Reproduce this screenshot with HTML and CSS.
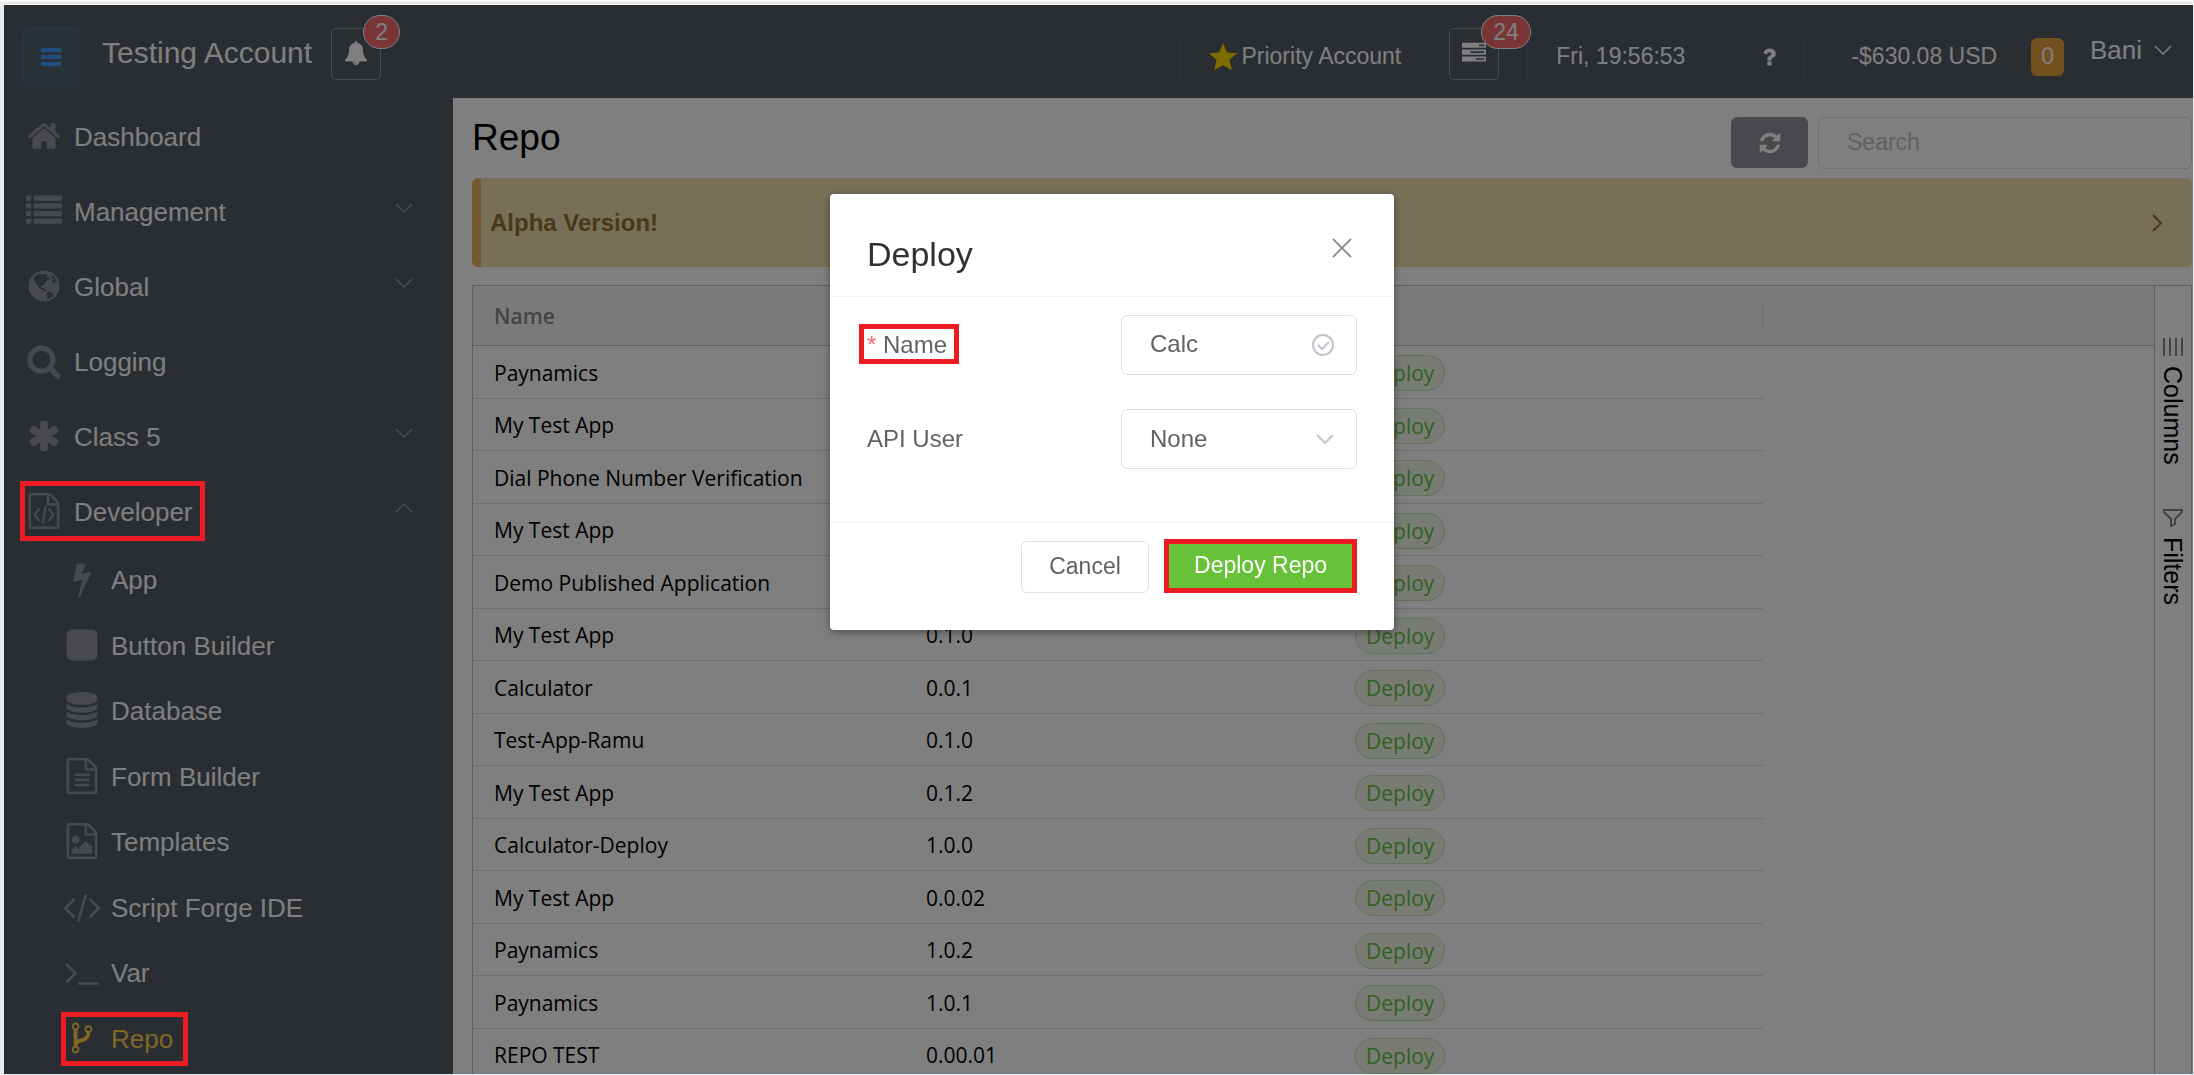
FILE: index.html
```html
<!DOCTYPE html>
<html lang="en">
<head>
<meta charset="utf-8">
<title>Repo</title>
<link rel="stylesheet" href="styles.css">
</head>
<body>
<svg class="sprite" aria-hidden="true">
  <symbol id="i-home" viewBox="0 0 1792 1792"><path d="M1472 992v480q0 26-19 45t-45 19h-384v-384h-256v384h-384q-26 0-45-19t-19-45v-480q0-1 .5-3t.5-3l575-474 575 474q1 2 1 6zm223-69l-62 74q-8 9-21 11h-3q-13 0-21-7l-692-577-692 577q-12 8-24 7-13-2-21-11l-62-74q-8-10-7-23.5t11-21.5l719-599q32-26 76-26t76 26l244 204v-195q0-14 9-23t23-9h192q14 0 23 9t9 23v408l219 182q10 8 11 21.5t-7 23.5z"/></symbol>
  <symbol id="i-list" viewBox="0 0 1792 1792"><g><rect x="0" y="128" width="256" height="256" rx="32"/><rect x="384" y="128" width="1408" height="256" rx="32"/><rect x="0" y="512" width="256" height="256" rx="32"/><rect x="384" y="512" width="1408" height="256" rx="32"/><rect x="0" y="896" width="256" height="256" rx="32"/><rect x="384" y="896" width="1408" height="256" rx="32"/><rect x="0" y="1280" width="256" height="256" rx="32"/><rect x="384" y="1280" width="1408" height="256" rx="32"/></g></symbol>
  <symbol id="i-globe" viewBox="0 0 1792 1792"><path fill-rule="evenodd" d="M896 128a768 768 0 1 0 0 1536a768 768 0 1 0 0-1536zM400 450L540 340L700 300L790 330L870 290L960 320L1010 300L1080 360L1010 400L1060 470L1140 440L1210 540L1120 600L1040 640L960 740L900 800L910 880L860 850L780 850L730 920L760 1000L840 1010L880 960L910 1060L1010 1100L1060 1130L1010 1160L880 1110L760 1060L640 980L600 880L500 760L440 640L380 600zM1060 1190L1180 1170L1340 1260L1400 1300L1320 1420L1180 1500L1060 1560L1010 1550L1080 1400L1010 1300zM1250 330L1360 400L1460 520L1530 700L1440 690L1380 780L1330 730L1310 620L1360 540L1280 480L1240 400z"/></symbol>
  <symbol id="i-search" viewBox="0 0 1792 1792"><path d="M1216 832q0-185-131.500-316.500t-316.500-131.500-316.500 131.500-131.500 316.500 131.500 316.500 316.500 131.500 316.500-131.500 131.500-316.500zm512 832q0 52-38 90t-90 38q-54 0-90-38l-343-342q-179 124-399 124-143 0-273.500-55.500t-225-150-150-225-55.500-273.500 55.500-273.500 150-225 225-150 273.500-55.500 273.500 55.500 225 150 150 225 55.500 273.500q0 220-124 399l343 343q37 37 37 90z"/></symbol>
  <symbol id="i-asterisk" viewBox="0 0 1792 1792"><path d="M1546 1050q46 26 59.500 77.500t-12.500 97.500l-64 110q-26 46-77.500 59.500t-97.500-12.500l-266-153v307q0 52-38 90t-90 38h-128q-52 0-90-38t-38-90v-307l-266 153q-46 26-97.500 12.500t-77.500-59.500l-64-110q-26-46-12.500-97.500t59.500-77.500l266-154-266-154q-46-26-59.500-77.500t12.500-97.500l64-110q26-46 77.500-59.500t97.500 12.500l266 153v-307q0-52 38-90t90-38h128q52 0 90 38t38 90v307l266-153q46-26 97.500-12.500t77.500 59.500l64 110q26 46 12.500 97.500t-59.500 77.500l-266 154z"/></symbol>
  <symbol id="i-filecode" viewBox="0 0 1792 1792"><path d="M1596 380q28 28 48 76t20 88v1152q0 40-28 68t-68 28h-1344q-40 0-68-28t-28-68v-1600q0-40 28-68t68-28h896q40 0 88 20t76 48zm-444-244v376h376q-10-29-22-41l-313-313q-12-12-41-22zm384 1528v-1024h-416q-40 0-68-28t-28-68v-416h-768v1536h1280z"/><path d="M640 800L430 1080L640 1360M1152 800L1362 1080L1152 1360M970 690L830 1480" fill="none" stroke="currentColor" stroke-width="110" stroke-linecap="round"/></symbol>
  <symbol id="i-bolt" viewBox="0 0 1792 1792"><path d="M1333 566q18 20 7 44l-540 1157q-13 25-42 25-4 0-14-2-17-5-25.500-19t-4.500-30l197-808-406 101q-4 1-12 1-18 0-31-11-18-15-13-39l201-825q4-14 16-23t28-9h328q19 0 32 12.500t13 29.500q0 8-5 18l-171 463 396-98q8-2 12-2 19 0 34 15z"/></symbol>
  <symbol id="i-square" viewBox="0 0 1792 1792"><rect x="128" y="128" width="1536" height="1536" rx="288"/></symbol>
  <symbol id="i-database" viewBox="0 0 1792 1792"><path d="M896 768q237 0 443-43t325-127v170q0 69-103 128t-280 93.500-385 34.500-385-34.500-280-93.500-103-128v-170q119 84 325 127t443 43zm0 768q237 0 443-43t325-127v170q0 69-103 128t-280 93.500-385 34.500-385-34.500-280-93.500-103-128v-170q119 84 325 127t443 43zm0-384q237 0 443-43t325-127v170q0 69-103 128t-280 93.500-385 34.500-385-34.500-280-93.500-103-128v-170q119 84 325 127t443 43zm0-1152q208 0 385 34.500t280 93.500 103 128v128q0 69-103 128t-280 93.500-385 34.500-385-34.500-280-93.500-103-128v-128q0-69 103-128t280-93.500 385-34.500z"/></symbol>
  <symbol id="i-filetext" viewBox="0 0 1792 1792"><path d="M1596 380q28 28 48 76t20 88v1152q0 40-28 68t-68 28h-1344q-40 0-68-28t-28-68v-1600q0-40 28-68t68-28h896q40 0 88 20t76 48zm-444-244v376h376q-10-29-22-41l-313-313q-12-12-41-22zm384 1528v-1024h-416q-40 0-68-28t-28-68v-416h-768v1536h1280z"/><path d="M512 768h768v128h-768zM512 1024h768v128h-768zM512 1280h768v128h-768z"/></symbol>
  <symbol id="i-fileimage" viewBox="0 0 1792 1792"><path d="M1596 380q28 28 48 76t20 88v1152q0 40-28 68t-68 28h-1344q-40 0-68-28t-28-68v-1600q0-40 28-68t68-28h896q40 0 88 20t76 48zm-444-244v376h376q-10-29-22-41l-313-313q-12-12-41-22zm384 1528v-1024h-416q-40 0-68-28t-28-68v-416h-768v1536h1280z"/><path d="M1408 1216v320h-1024v-192l192-192 128 128 384-384zM576 1024a192 192 0 1 1 0-384a192 192 0 1 1 0 384z"/></symbol>
  <symbol id="i-code" viewBox="0 0 1792 1792"><path d="M553 1399l-50 50q-10 10-23 10t-23-10l-466-466q-10-10-10-23t10-23l466-466q10-10 23-10t23 10l50 50q10 10 10 23t-10 23l-393 393 393 393q10 10 10 23t-10 23zm591-1067l-373 1291q-4 13-15.500 19.500t-23.500 2.500l-62-17q-13-4-19.500-15.500t-2.500-24.500l373-1291q4-13 15.500-19.500t23.500-2.500l62 17q13 4 19.500 15.500t2.500 24.500zm657 651l-466 466q-10 10-23 10t-23-10l-50-50q-10-10-10-23t10-23l393-393-393-393q-10-10-10-23t10-23l50-50q10-10 23-10t23 10l466 466q10 10 10 23t-10 23z"/></symbol>
  <symbol id="i-terminal" viewBox="0 0 1792 1792"><path d="M649 983l-466 466q-10 10-23 10t-23-10l-50-50q-10-10-10-23t10-23l393-393-393-393q-10-10-10-23t10-23l50-50q10-10 23-10t23 10l466 466q10 10 10 23t-10 23zm1079 457v64q0 14-9 23t-23 9h-960q-14 0-23-9t-9-23v-64q0-14 9-23t23-9h960q14 0 23 9t9 23z"/></symbol>
  <symbol id="i-fork" viewBox="0 0 1792 1792"><path d="M672 1472q0-40-28-68t-68-28-68 28-28 68 28 68 68 28 68-28 28-68zm0-1152q0-40-28-68t-68-28-68 28-28 68 28 68 68 28 68-28 28-68zm640 128q0-40-28-68t-68-28-68 28-28 68 28 68 68 28 68-28 28-68zm96 0q0 52-26 96.500t-70 69.500q-2 287-226 414-67 38-203 81-128 40-169.500 71t-41.500 100v26q44 25 70 69.500t26 96.500q0 80-56 136t-136 56-136-56-56-136q0-52 26-96.500t70-69.500v-820q-44-25-70-69.500t-26-96.500q0-80 56-136t136-56 136 56 56 136q0 52-26 96.500t-70 69.500v497q54-26 154-57 55-17 87.500-29.500t70.500-31 59-39.500 40.500-51 28-69.500 8.500-91.500q-44-25-70-69.500t-26-96.500q0-80 56-136t136-56 136 56 56 136z"/></symbol>
  <symbol id="i-bell" viewBox="0 0 1792 1792"><path d="M912 1696q0-16-16-16-59 0-101.500-42.500t-42.500-101.500q0-16-16-16t-16 16q0 73 51.500 124.500t124.500 51.500q16 0 16-16zm816-288q0 52-38 90t-90 38h-448q0 106-75 181t-181 75-181-75-75-181h-448q-52 0-90-38t-38-90q50-42 91-88t85-119.500 74.500-158.500 50-206 19.500-260q0-152 117-282.500t307-158.500q-8-19-8-39 0-40 28-68t68-28 68 28 28 68q0 20-8 39 190 28 307 158.500t117 282.500q0 139 19.500 260t50 206 74.500 158.500 85 119.500 91 88z"/></symbol>
  <symbol id="i-tasks" viewBox="0 0 1792 1792"><path fill-rule="evenodd" d="M0 128h1792v384h-1792zM1280 256v128h384v-128zM0 640h1792v384h-1792zM640 768v128h1024v-128zM0 1152h1792v384h-1792zM1024 1280v128h640v-128z"/></symbol>
  <symbol id="i-bars" viewBox="0 0 20 18"><path d="M0 0h20v4h-20zM0 7h20v4h-20zM0 14h20v4h-20z"/></symbol>
  <symbol id="i-star" viewBox="0 0 28 28"><path d="M14 0l4 9.500l10 .8l-7.600 6.700l2.500 10.300l-8.900-5l-8.900 5l2.500-10.300l-7.600-6.700l10-.8z"/></symbol>
  <symbol id="i-question" viewBox="0 0 1792 1792"><path d="M1088 1256v240q0 16-12 28t-28 12h-240q-16 0-28-12t-12-28v-240q0-16 12-28t28-12h240q16 0 28 12t12 28zm316-600q0 54-15.500 101t-35 76.500-55 59.500-57.500 43.500-61 35.500q-41 23-68.500 65t-27.500 67q0 17-12 32.500t-28 15.500h-240q-15 0-25.500-18.500t-10.500-37.500v-45q0-83 65-156.500t143-108.500q59-27 84-56t25-76q0-42-46.500-74t-107.500-32q-65 0-108 29-35 25-107 115-13 16-31 16-12 0-25-8l-164-125q-13-10-15.500-25t5.500-28q160-266 464-266 80 0 161 31t146 83 106 127.500 41 158.500z"/></symbol>
  <symbol id="i-refresh" viewBox="0 0 1792 1792"><path d="M1639 1056q0 5-1 7-64 268-268 434.500t-478 166.500q-146 0-282.500-55t-243.500-157l-129 129q-19 19-45 19t-45-19-19-45v-448q0-26 19-45t45-19h448q26 0 45 19t19 45-19 45l-137 137q71 66 161 102t187 36q134 0 250-65t186-179q11-17 53-117 8-23 30-23h192q13 0 22.500 9.500t9.500 22.500zm25-800v448q0 26-19 45t-45 19h-448q-26 0-45-19t-19-45 19-45l138-138q-148-137-349-137-134 0-250 65t-186 179q-11 17-53 117-8 23-30 23h-199q-13 0-22.500-9.500t-9.500-22.500v-7q65-268 270-434.500t480-166.500q146 0 284 55.500t245 156.500l130-129q19-19 45-19t45 19 19 45z"/></symbol>
  <symbol id="i-down" viewBox="0 0 18 18"><path class="line" d="M1 5l8 8l8-8"/></symbol>
  <symbol id="i-up" viewBox="0 0 18 18"><path class="line" d="M1 13l8-8l8 8"/></symbol>
  <symbol id="i-right" viewBox="0 0 18 18"><path class="line" d="M5 1l8 8l-8 8"/></symbol>
  <symbol id="i-close" viewBox="0 0 20 20"><path class="line" d="M1 1l18 18M19 1l-18 18"/></symbol>
  <symbol id="i-check" viewBox="0 0 22 22"><path class="line" d="M11 1a10 10 0 1 0 0 20a10 10 0 1 0 0-20zM6 11l4 4l7-7"/></symbol>
  <symbol id="i-columns" viewBox="0 0 20 18"><path class="line" d="M1 0v18M7 0v18M13 0v18M19 0v18"/></symbol>
  <symbol id="i-filter" viewBox="0 0 20 18"><path class="line" d="M1 1h18v2l-7 7v5l-4 2v-7l-7-7z"/></symbol>
</svg>

<div class="frame">
  <div class="app">
    <header class="topbar">
      <button class="menu-toggle" type="button" aria-label="Toggle menu"><svg class="icon-bars"><use href="#i-bars"/></svg></button>
      <span class="account">Testing Account</span>
      <button class="icon-btn" type="button" aria-label="Notifications"><svg class="icon-24"><use href="#i-bell"/></svg><span class="count">2</span></button>
      <div class="topbar-right">
        <button class="chip chip-priority" type="button"><svg class="icon-star"><use href="#i-star"/></svg>Priority Account</button>
        <button class="icon-btn icon-tasks" type="button" aria-label="Tasks"><svg class="icon-24"><use href="#i-tasks"/></svg><span class="count">24</span></button>
        <button class="chip" type="button">Fri, 19:56:53</button>
        <button class="chip chip-help" type="button" aria-label="Help"><svg class="icon-24"><use href="#i-question"/></svg></button>
        <button class="chip" type="button">-$630.08 USD</button>
        <span class="tally">0</span>
        <button class="user" type="button">Bani<svg class="icon-18"><use href="#i-down"/></svg></button>
      </div>
    </header>

    <div class="body">
      <nav class="sidebar">
        <ul class="menu">
          <li><a href="#"><svg><use href="#i-home"/></svg>Dashboard</a></li>
          <li><a href="#"><svg><use href="#i-list"/></svg>Management<svg class="arrow"><use href="#i-down"/></svg></a></li>
          <li><a href="#"><svg><use href="#i-globe"/></svg>Global<svg class="arrow"><use href="#i-down"/></svg></a></li>
          <li><a href="#"><svg><use href="#i-search"/></svg>Logging</a></li>
          <li><a href="#"><svg><use href="#i-asterisk"/></svg>Class 5<svg class="arrow"><use href="#i-down"/></svg></a></li>
          <li><a href="#"><span class="marked"><svg><use href="#i-filecode"/></svg>Developer</span><svg class="arrow"><use href="#i-up"/></svg></a>
            <ul class="submenu">
              <li><a href="#"><svg><use href="#i-bolt"/></svg>App</a></li>
              <li><a href="#"><svg><use href="#i-square"/></svg>Button Builder</a></li>
              <li><a href="#"><svg><use href="#i-database"/></svg>Database</a></li>
              <li><a href="#"><svg><use href="#i-filetext"/></svg>Form Builder</a></li>
              <li><a href="#"><svg><use href="#i-fileimage"/></svg>Templates</a></li>
              <li><a href="#"><svg><use href="#i-code"/></svg>Script Forge IDE</a></li>
              <li><a href="#"><svg><use href="#i-terminal"/></svg>Var</a></li>
              <li><a href="#" class="active"><span class="marked"><svg><use href="#i-fork"/></svg>Repo</span></a></li>
            </ul>
          </li>
        </ul>
      </nav>

      <main class="content">
        <div class="page-head">
          <h1>Repo</h1>
          <button class="refresh" type="button" aria-label="Refresh"><svg class="icon-24"><use href="#i-refresh"/></svg></button>
          <input class="search" type="search" placeholder="Search" aria-label="Search">
        </div>
        <div class="alert"><strong>Alpha Version!</strong><svg class="icon-18"><use href="#i-right"/></svg></div>
        <div class="grid">
          <div class="grid-main">
            <table>
              <colgroup><col class="c-name"><col class="c-ver"><col class="c-act"><col></colgroup>
              <thead><tr><th>Name</th><th></th><th class="last"></th><th></th></tr></thead>
              <tbody>
                <tr><td>Paynamics</td><td></td><td><button class="tag" type="button">Deploy</button></td></tr>
                <tr><td>My Test App</td><td></td><td><button class="tag" type="button">Deploy</button></td></tr>
                <tr><td>Dial Phone Number Verification</td><td></td><td><button class="tag" type="button">Deploy</button></td></tr>
                <tr><td>My Test App</td><td></td><td><button class="tag" type="button">Deploy</button></td></tr>
                <tr><td>Demo Published Application</td><td></td><td><button class="tag" type="button">Deploy</button></td></tr>
                <tr><td>My Test App</td><td>0.1.0</td><td><button class="tag" type="button">Deploy</button></td></tr>
                <tr><td>Calculator</td><td>0.0.1</td><td><button class="tag" type="button">Deploy</button></td></tr>
                <tr><td>Test-App-Ramu</td><td>0.1.0</td><td><button class="tag" type="button">Deploy</button></td></tr>
                <tr><td>My Test App</td><td>0.1.2</td><td><button class="tag" type="button">Deploy</button></td></tr>
                <tr><td>Calculator-Deploy</td><td>1.0.0</td><td><button class="tag" type="button">Deploy</button></td></tr>
                <tr><td>My Test App</td><td>0.0.02</td><td><button class="tag" type="button">Deploy</button></td></tr>
                <tr><td>Paynamics</td><td>1.0.2</td><td><button class="tag" type="button">Deploy</button></td></tr>
                <tr><td>Paynamics</td><td>1.0.1</td><td><button class="tag" type="button">Deploy</button></td></tr>
                <tr><td>REPO TEST</td><td>0.00.01</td><td><button class="tag" type="button">Deploy</button></td></tr>
              </tbody>
            </table>
          </div>
          <div class="grid-side">
            <button type="button"><svg><use href="#i-columns"/></svg>Columns</button>
            <button type="button"><svg><use href="#i-filter"/></svg>Filters</button>
          </div>
        </div>
      </main>
    </div>
  </div>

  <div class="overlay">
    <form class="dialog" role="dialog" aria-labelledby="dialog-title">
      <div class="dialog-head">
        <h2 id="dialog-title">Deploy</h2>
        <button class="close" type="button" aria-label="Close"><svg><use href="#i-close"/></svg></button>
      </div>
      <div class="dialog-body">
        <div class="field">
          <label for="name"><span class="marked"><span class="req">*</span> Name</span></label>
          <div class="control"><input id="name" type="text" value="Calc"><svg class="icon-check"><use href="#i-check"/></svg></div>
        </div>
        <div class="field">
          <label for="api-user">API User</label>
          <div class="control"><select id="api-user"><option>None</option></select><svg class="icon-18"><use href="#i-down"/></svg></div>
        </div>
      </div>
      <div class="dialog-foot">
        <button class="cancel" type="button">Cancel</button>
        <button class="submit" type="submit">Deploy Repo</button>
      </div>
    </form>
  </div>
</div>
</body>
</html>
```
FILE: styles.css
```css
* { box-sizing: border-box; }

body {
  margin: 0;
  background: #e8ebee;
  font-family: "Liberation Sans", Arial, sans-serif;
  font-size: 23px;
  color: #000;
}

button, input, select { font: inherit; color: inherit; }
button { padding: 0; background: none; border: 0; }
svg { display: block; flex: none; fill: currentColor; stroke-width: 1.5; }
ul { list-style: none; margin: 0; padding: 0; }
.sprite { position: absolute; width: 0; height: 0; }
.line { fill: none; stroke: currentColor; }

.frame {
  height: 100vh;
  padding: 5px 1px 1px 4px;
  background: linear-gradient(#f8f8f8 2px, #e8e8e8 2px, #e8e8e8 4px, #fff 4px, #fff 5px, transparent 5px);
  overflow: hidden;
}
.app {
  height: 100%;
  display: flex;
  flex-direction: column;
  overflow: hidden;
  background: #fff;
}

/* Top bar */
.topbar {
  flex: none;
  height: 93px;
  display: flex;
  align-items: flex-start;
  padding: 22px 21px 0 18px;
  background: #545c64;
  color: #fff;
}
.menu-toggle {
  width: 58px;
  height: 60px;
  display: grid;
  place-items: center;
  border: 1px solid rgba(64, 158, 255, .2);
  border-radius: 6px;
  background: rgba(64, 158, 255, .1);
  color: #409eff;
}
.icon-bars { width: 20px; height: 18px; }
.icon-24 { width: 24px; height: 24px; }
.icon-18 { width: 18px; height: 18px; }
.icon-star { width: 28px; height: 28px; color: #ffd700; }
.account { margin: 9px 19px 0 22px; font-size: 30px; line-height: 34px; }
.icon-btn {
  position: relative;
  width: 50px;
  height: 52px;
  margin-top: 1px;
  display: flex;
  justify-content: center;
  padding-top: 12px;
  border: 1px solid #96999e;
  border-radius: 5px;
}
.count {
  position: absolute;
  left: 31px;
  top: -14px;
  height: 34px;
  padding: 0 11px;
  border: 1px solid #fff;
  border-radius: 17px;
  background: #f56c6c;
  line-height: 32px;
}
.topbar-right { margin-left: auto; display: flex; align-items: flex-start; }
.chip {
  height: 51px;
  margin: 5px 19px 0 0;
  display: flex;
  align-items: center;
  gap: 4px;
  padding: 0 28px 2px;
  border: 1px solid rgba(64, 158, 255, .18);
  border-radius: 5px;
}
.icon-tasks { margin-right: 28px; }
.chip-help { margin-right: 17px; padding: 0 23px 2px; }
.tally {
  height: 38px;
  margin: 11px 0 0 -14px;
  padding: 0 10px;
  border-radius: 6px;
  background: #e6a23c;
  line-height: 36px;
}
.user {
  margin: 8px 0 0 26px;
  display: flex;
  align-items: center;
  gap: 12px;
  font-size: 26px;
  line-height: 30px;
}

/* Sidebar */
.body { flex: 1; min-height: 0; display: flex; }
.sidebar { flex: none; width: 449px; background: #545c64; color: #fff; overflow: clip; }
.menu a {
  height: 75px;
  display: flex;
  align-items: center;
  gap: 12px;
  padding: 4px 40px 0 22px;
  color: inherit;
  text-decoration: none;
  font-size: 26px;
}
.menu svg { width: 36px; height: 36px; margin-bottom: 3px; color: #909399; }
.menu .arrow { width: 18px; height: 18px; margin: 0 0 10px auto; }
.menu .submenu a { height: 65px; gap: 11px; padding: 0 0 0 60px; }
.menu .submenu li:nth-child(even) a { height: 66px; }
.menu .active, .menu .active svg { color: #ffd04b; }
.menu .marked { display: flex; align-items: center; gap: inherit; height: 36px; }

/* Red callout frames, drawn above the dimmed page */
.marked { position: relative; }
.marked::after {
  content: "";
  position: absolute;
  z-index: 30;
  inset: -7px -12px -6px -8px;
  border: 5px solid #ed1c24;
}
.menu .marked::after { inset: -14px -12px -10px -6px; }
.menu .submenu .marked::after { inset: -9px -15px -9px -3px; }

/* Page content */
.content { flex: 1; min-width: 0; display: flex; flex-direction: column; padding: 19px 1px 0 19px; }
.page-head { display: flex; gap: 10px; height: 61px; }
h1 { margin: 0 auto 0 0; font-size: 37px; font-weight: 400; line-height: 42px; }
.refresh {
  width: 77px;
  height: 51px;
  display: grid;
  place-items: center;
  border-radius: 6px;
  background: #909399;
  color: #fff;
}
.search {
  width: 374px;
  height: 52px;
  padding: 0 28px 2px;
  border: 1px solid #dcdfe6;
  border-radius: 6px;
  background: #fff;
}
.search::placeholder { color: #c0c4cc; opacity: 1; }
.alert {
  flex: none;
  height: 89px;
  display: flex;
  align-items: center;
  justify-content: space-between;
  padding: 0 26px 0 9px;
  border-left: 9px solid #e6b566;
  border-radius: 6px;
  background: #eedfb0;
  color: #966e34;
  font-size: 24px;
}
.alert svg { stroke-width: 2; }
.grid { flex: 1; min-height: 0; margin-top: 18px; display: flex; border: 1px solid #bdc3c7; border-bottom: 0; }
.grid-main { flex: 1; min-width: 0; overflow: hidden; font-family: "Open Sans", "Noto Sans", sans-serif; font-size: 21px; }
table { width: 100%; table-layout: fixed; border-collapse: separate; border-spacing: 0; }
.c-name { width: 432px; }
.c-ver, .c-act { width: 429px; }
th {
  position: relative;
  height: 60px;
  padding: 0 21px;
  border-bottom: 1px solid #bdc3c7;
  background: #f5f7f7;
  color: #84888c;
  font-weight: 600;
  text-align: left;
}
.last::after {
  content: "";
  position: absolute;
  right: 0;
  top: 15px;
  height: 30px;
  border-right: 1px solid #dadddf;
}
td { height: 53px; padding: 1px 21px 0; border-bottom: 1px solid #d9dcde; }
tr:nth-child(even) td { height: 52px; }
.tag {
  display: block;
  height: 36px;
  margin-top: 1px;
  padding: 0 10px;
  border: 1px solid #c2e7b0;
  border-radius: 18px;
  background: #f0f9eb;
  color: #67c23a;
  line-height: 30px;
}
.grid-side { width: 37px; display: flex; flex-direction: column; border-left: 1px solid #bdc3c7; padding-top: 52px; gap: 44px; }
.grid-side button { display: flex; align-items: center; gap: 10px; writing-mode: vertical-rl; font-size: 25px; line-height: 34px; }
.grid-side svg { width: 20px; height: 18px; color: #7f8c8d; stroke-width: 2; }

/* Dialog */
.overlay {
  position: fixed;
  z-index: 20;
  inset: 5px 1px 1px 4px;
  display: flex;
  justify-content: center;
  align-items: flex-start;
  padding-top: 189px;
  padding-left: 27px;
  background: rgba(0, 0, 0, .5);
}
.dialog {
  width: 564px;
  border-radius: 4px;
  background: #fff;
  color: #606266;
  font-size: 24px;
  box-shadow: 0 2px 8px rgba(0, 0, 0, .4);
}
.dialog-head {
  height: 103px;
  display: flex;
  justify-content: space-between;
  align-items: flex-start;
  padding: 41px 42px 0 37px;
  border-bottom: 1px solid #ecf5ff;
}
h2 { margin: 0; color: #303133; font-size: 34px; font-weight: 400; line-height: 38px; }
.close { margin-top: 3px; color: #909399; }
.close svg { width: 20px; height: 20px; stroke-width: 2; }
.dialog-body { display: grid; gap: 34px; padding: 18px 37px 53px; }
.field { display: grid; grid-template-columns: 1fr 236px; align-items: center; }
.control { display: grid; align-items: center; color: #606266; }
.control input, .control select {
  grid-area: 1 / 1;
  width: 100%;
  height: 60px;
  padding: 0 28px 2px;
  border: 1px solid #dcdfe6;
  border-radius: 6px;
  background: #fff;
  appearance: none;
}
.control svg { grid-area: 1 / 1; justify-self: end; margin-right: 23px; color: #c0c4cc; stroke-width: 2; pointer-events: none; }
.icon-check { width: 22px; height: 22px; }
.req { color: #f56c6c; }
.dialog-foot {
  display: flex;
  justify-content: flex-end;
  gap: 15px;
  padding: 16px 37px 37px;
  border-top: 1px solid #ecf5ff;
  font-size: 23px;
}
.cancel { width: 128px; height: 52px; margin-top: 2px; padding-bottom: 2px; border: 1px solid #dcdfe6; border-radius: 6px; }
.submit { height: 54px; padding: 0 25px 2px; border: 5px solid #ed1c24; background: #67c23a; color: #fff; }
```
